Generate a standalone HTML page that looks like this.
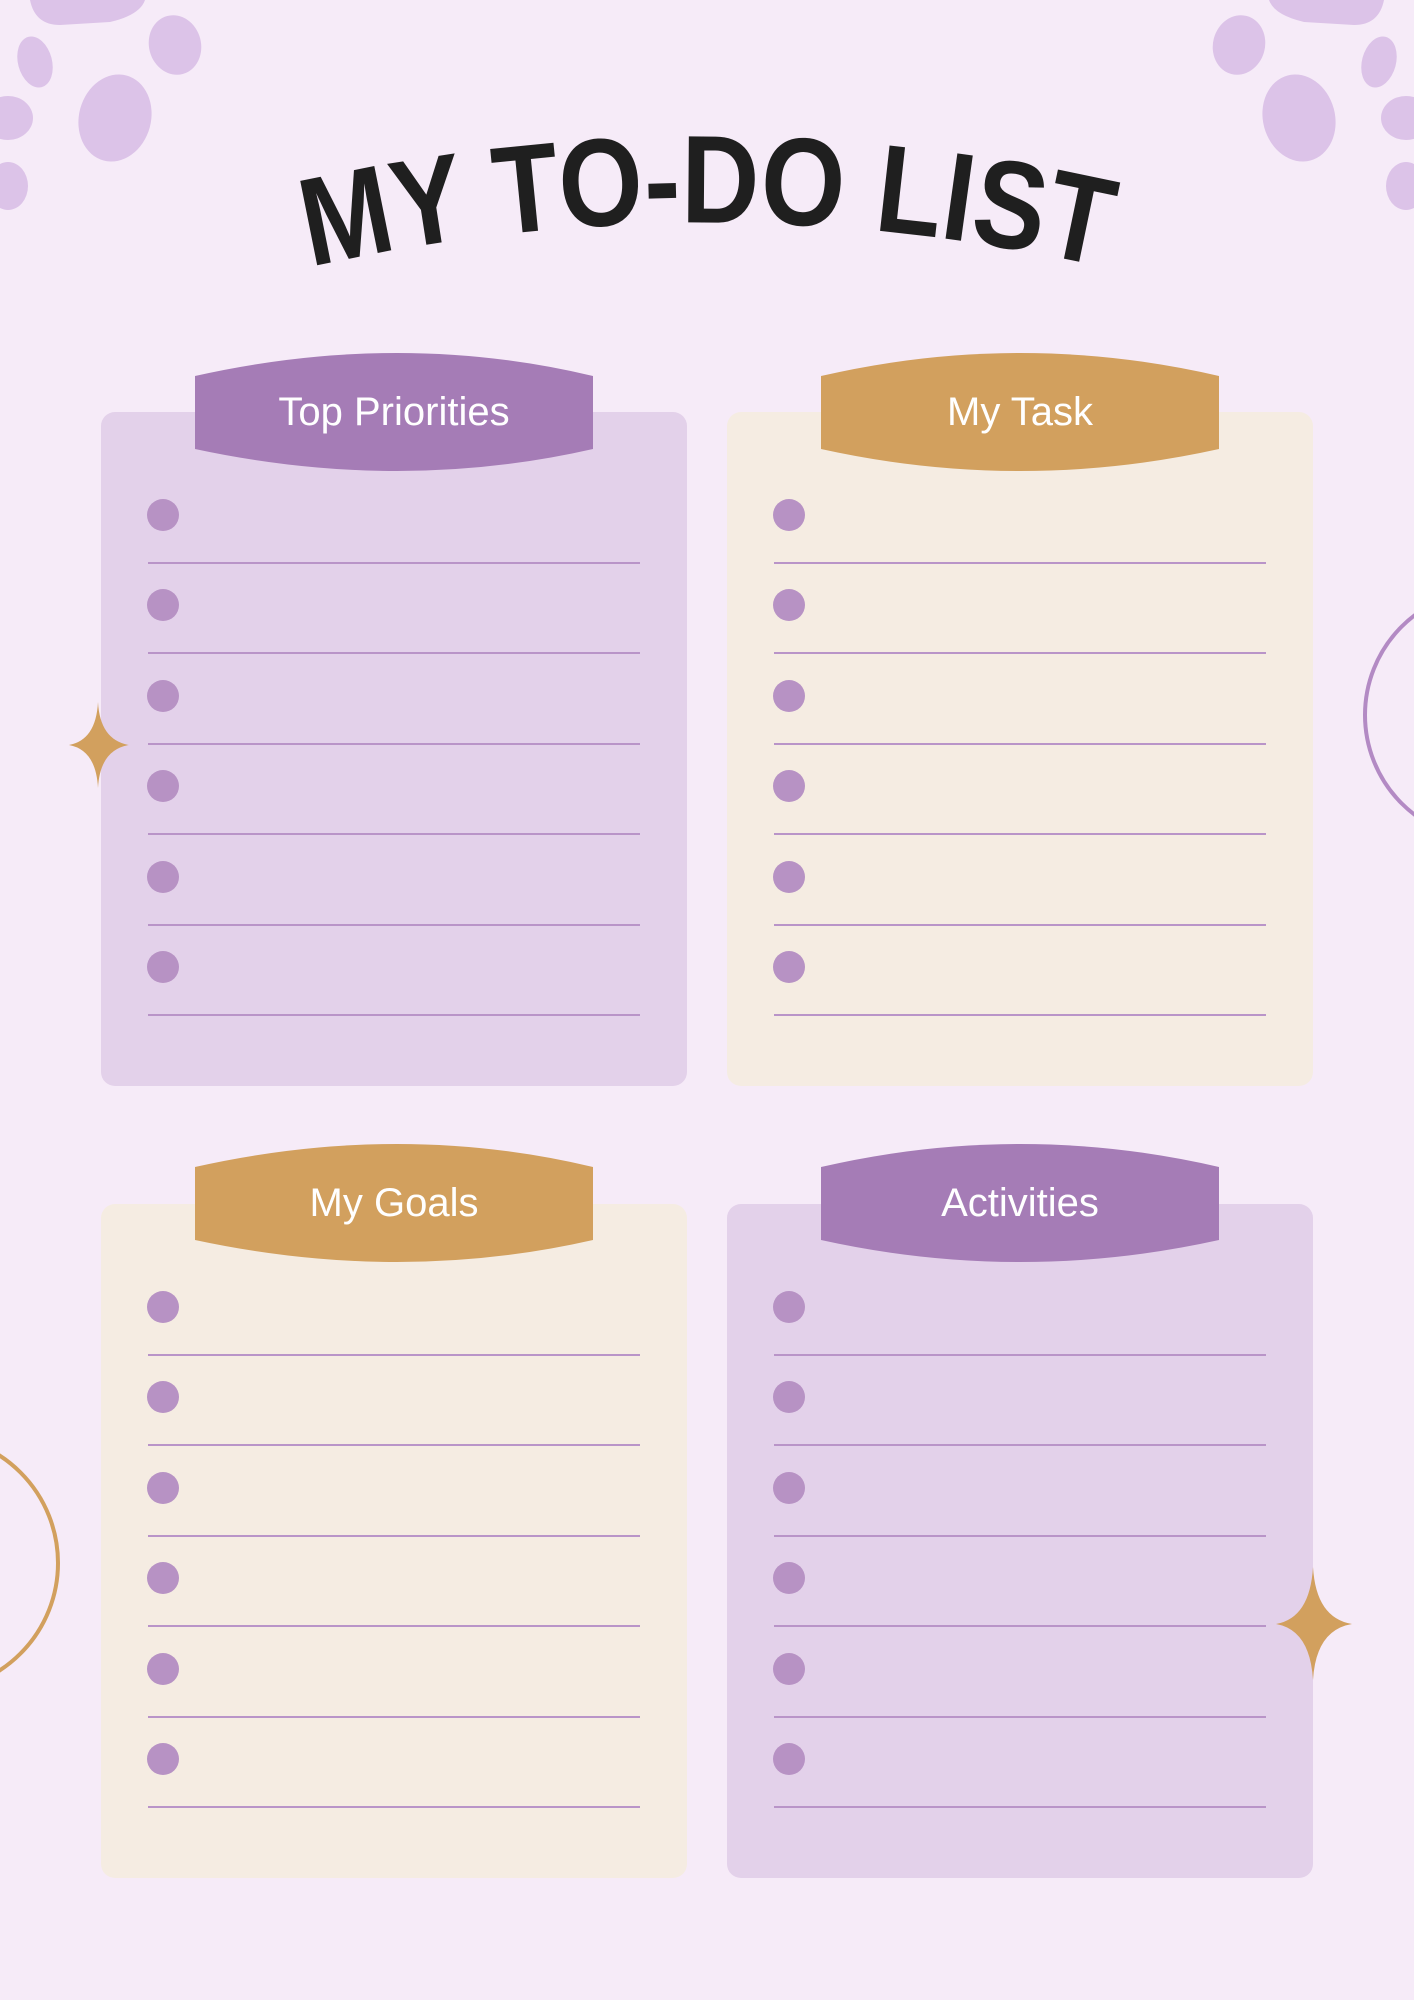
<!DOCTYPE html>
<html><head><meta charset="utf-8"><style>
body{margin:0;width:1414px;height:2000px;background:#f6ebf8;position:relative;overflow:hidden;font-family:"Liberation Sans",sans-serif}
.card{position:absolute;width:586px;height:674px;border-radius:14px}
.p{background:#e3d1ea}.c{background:#f5ece2}
.line{position:absolute;left:47px;width:492px;height:2px;background:#b994c8}
.dot{position:absolute;left:46px;width:32px;height:32px;border-radius:50%;background:#b792c4}
svg{position:absolute;left:0;top:0}
.tabt{position:absolute;width:398px;text-align:center;color:#fff;font-size:40px;line-height:40px}
</style></head><body>
<svg width="1414" height="2000">
<g fill="#dcc3e8">
<path d="M30 0 Q35 25 60 25 L110 22 Q140 15 145 0Z"/>
<ellipse cx="175" cy="45" rx="26" ry="30" transform="rotate(-15 175 45)"/>
<ellipse cx="35" cy="62" rx="17" ry="26" transform="rotate(-15 35 62)"/>
<ellipse cx="115" cy="118" rx="36" ry="44" transform="rotate(15 115 118)"/>
<ellipse cx="8" cy="118" rx="25" ry="22"/>
<ellipse cx="8" cy="186" rx="20" ry="24"/>
<path d="M1384 0 Q1379 25 1354 25 L1304 22 Q1274 15 1269 0Z"/>
<ellipse cx="1239" cy="45" rx="26" ry="30" transform="rotate(15 1239 45)"/>
<ellipse cx="1379" cy="62" rx="17" ry="26" transform="rotate(15 1379 62)"/>
<ellipse cx="1299" cy="118" rx="36" ry="44" transform="rotate(-15 1299 118)"/>
<ellipse cx="1406" cy="118" rx="25" ry="22"/>
<ellipse cx="1406" cy="186" rx="20" ry="24"/>
</g>
<circle cx="1490" cy="715" r="125" fill="none" stroke="#b38ac4" stroke-width="4"/>
<circle cx="-70" cy="1563" r="128" fill="none" stroke="#d2a05e" stroke-width="4"/>
<defs><path id="arc" d="M250 282 A1790 1790 0 0 1 1164 282"/></defs>
<text font-family="Liberation Sans, sans-serif" font-weight="bold" font-size="125" fill="#1f1f1f"><textPath href="#arc" startOffset="50%" text-anchor="middle" textLength="800" lengthAdjust="spacingAndGlyphs">MY TO-DO LIST</textPath></text>
</svg>
<div class="card p" style="left:101px;top:412px"></div>
<div class="card c" style="left:727px;top:412px"></div>
<div class="card c" style="left:101px;top:1204px"></div>
<div class="card p" style="left:727px;top:1204px"></div>
<div id="lists"></div>
<svg width="1414" height="2000">
<path d="M195 376 Q400 330 593 376 L593 449 Q400 493 195 449Z" fill="#a57cb6"/>
<path d="M821 376 Q1020 330 1219 376 L1219 449 Q1020 493 821 449Z" fill="#d2a05e"/>
<path d="M195 1167 Q400 1121 593 1167 L593 1240 Q400 1284 195 1240Z" fill="#d2a05e"/>
<path d="M821 1167 Q1020 1121 1219 1167 L1219 1240 Q1020 1284 821 1240Z" fill="#a57cb6"/>
<path d="M98 702 Q100 740 129 745 Q100 750 98 788 Q96 750 69 745 Q96 740 98 702Z" fill="#d2a05e"/>
<path d="M1313 1567 Q1316 1618 1352 1624 Q1316 1630 1313 1680 Q1310 1630 1276 1624 Q1310 1618 1313 1567Z" fill="#d2a05e"/>
</svg>
<div class="tabt" style="left:195px;top:392px">Top Priorities</div>
<div class="tabt" style="left:821px;top:392px">My Task</div>
<div class="tabt" style="left:195px;top:1183px">My Goals</div>
<div class="tabt" style="left:821px;top:1183px">Activities</div>
<script>
var h='';[[101,412],[727,412],[101,1204],[727,1204]].forEach(function(c){for(var i=0;i<6;i++){var y=c[1]+87+i*90.4;h+='<div class="dot" style="left:'+(c[0]+46)+'px;top:'+y+'px"></div><div class="line" style="left:'+(c[0]+47)+'px;top:'+(y+63)+'px"></div>';}});document.getElementById('lists').innerHTML=h;
</script>
</body></html>
